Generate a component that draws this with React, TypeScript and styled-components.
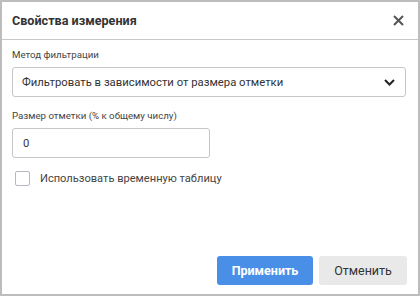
import React from 'react';
import styled, { createGlobalStyle } from 'styled-components';

const GlobalStyle = createGlobalStyle`
  html, body {
    margin: 0;
    padding: 0;
    background: #ffffff;
  }
  body {
    font-family: Roboto, "Noto Sans", sans-serif;
  }
`;

const Dialog = styled.div`
  box-sizing: border-box;
  width: 420px;
  height: 296px;
  border: 2px solid #bdbdbd;
  background: #fff;
  display: flex;
  flex-direction: column;
`;

const Header = styled.div`
  height: 37px;
  display: flex;
  align-items: center;
  justify-content: space-between;
  padding: 0 13px 0 10px;
  border-bottom: 1px solid #c8c8c8;
`;

const Title = styled.span`
  font-size: 12.6px;
  font-weight: 700;
  color: #333;
`;

const CloseButton = styled.button`
  border: none;
  background: none;
  padding: 0;
  width: 14px;
  height: 14px;
  display: flex;
  align-items: center;
  justify-content: center;
  cursor: pointer;
`;

const Body = styled.div`
  flex: 1;
  display: flex;
  flex-direction: column;
  padding: 8px 12px 0 10px;
`;

const Label = styled.div<{ $top?: number }>`
  font-size: 9.7px;
  color: #444;
  margin-top: ${p => p.$top ?? 0}px;
  margin-bottom: 6px;
  line-height: 13px;
`;

const Select = styled.div`
  box-sizing: border-box;
  height: 30px;
  border: 1px solid #c6c6c6;
  border-radius: 3px;
  display: flex;
  align-items: center;
  justify-content: space-between;
  padding: 0 10px 0 9px;
  font-size: 11.3px;
  color: #333;
`;

const Input = styled.div`
  box-sizing: border-box;
  width: 198px;
  height: 30px;
  border: 1px solid #c6c6c6;
  border-radius: 3px;
  display: flex;
  align-items: center;
  padding: 0 10px;
  font-size: 11.3px;
  color: #333;
`;

const CheckRow = styled.label`
  display: flex;
  align-items: center;
  gap: 10px;
  margin-top: 13px;
  padding-left: 3px;
  font-size: 11.1px;
  color: #444;
`;

const Box = styled.span`
  box-sizing: border-box;
  width: 15px;
  height: 15px;
  border: 1px solid #b8b8c0;
  border-radius: 2px;
`;

const Footer = styled.div`
  display: flex;
  justify-content: flex-end;
  gap: 6px;
  padding: 0 11px 9px 0;
`;

const Button = styled.button<{ $primary?: boolean }>`
  height: 29px;
  border: none;
  border-radius: 3px;
  padding: 0;
  width: ${p => (p.$primary ? 96 : 88)}px;
  font-family: Roboto, sans-serif;
  font-size: 12.5px;
  font-weight: ${p => (p.$primary ? 700 : 400)};
  background: ${p => (p.$primary ? '#4a8fe7' : '#e9e9e9')};
  color: ${p => (p.$primary ? '#fff' : '#333')};
  cursor: pointer;
`;

const App: React.FC = () => {
  return (
    <>
      <GlobalStyle />
      <Dialog>
        <Header>
          <Title>Свойства измерения</Title>
          <CloseButton aria-label="Закрыть">
            <svg width="11" height="11" viewBox="0 0 11 11">
              <path d="M1 1L10 10M10 1L1 10" stroke="#555" strokeWidth="2" />
            </svg>
          </CloseButton>
        </Header>
        <Body>
          <Label>Метод фильтрации</Label>
          <Select>
            <span>Фильтровать в зависимости от размера отметки</span>
            <svg width="11" height="7" viewBox="0 0 11 7">
              <path d="M1 1L5.5 5.5L10 1" stroke="#222" strokeWidth="2" fill="none" />
            </svg>
          </Select>
          <Label $top={12}>Размер отметки (% к общему числу)</Label>
          <Input>0</Input>
          <CheckRow>
            <Box />
            Использовать временную таблицу
          </CheckRow>
        </Body>
        <Footer>
          <Button $primary>Применить</Button>
          <Button>Отменить</Button>
        </Footer>
      </Dialog>
    </>
  );
};

export default App;
